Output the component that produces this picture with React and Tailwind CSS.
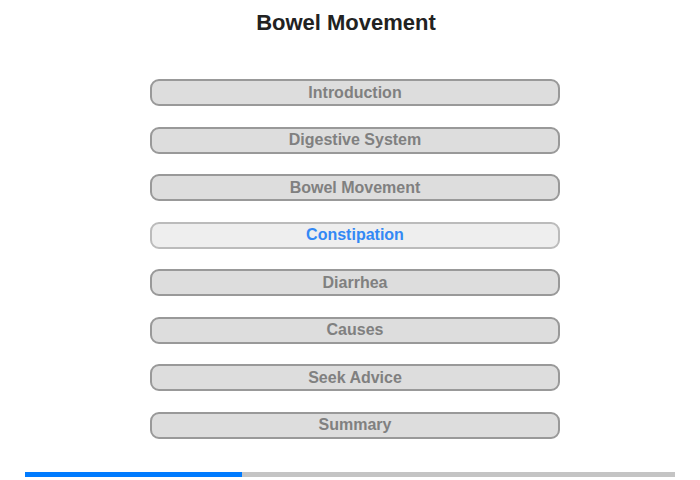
import React from 'react';

const sections = [
  'Introduction',
  'Digestive System',
  'Bowel Movement',
  'Constipation',
  'Diarrhea',
  'Causes',
  'Seek Advice',
  'Summary',
];

const App = () => {
  const active = 'Constipation';

  return (
    <div className="w-[700px] h-[480px] bg-white flex flex-col items-center font-['Liberation_Sans',Arial,sans-serif]">
      <h1 className="mt-[10px] mr-[8px] text-[22px] leading-[26px] font-bold text-[#222]">Bowel Movement</h1>

      <div className="mt-[43px] ml-[10px] flex flex-col gap-[20.5px] w-[410px]">
        {sections.map((s) =>
          s === active ? (
            <div
              key={s}
              className="h-[27px] rounded-[9px] border-2 border-[#bbbbbb] bg-[#eeeeee] flex items-center justify-center text-[16px] font-bold text-[#3388f5]"
            >
              {s}
            </div>
          ) : (
            <div
              key={s}
              className="h-[27px] rounded-[9px] border-2 border-[#999999] bg-[#dddddd] flex items-center justify-center text-[16px] font-bold text-[#808080]"
            >
              {s}
            </div>
          )
        )}
      </div>

      <div className="mt-auto mb-[3px] w-[650px] h-[5px] bg-[#c4c4c4] flex">
        <div className="w-[217px] h-full bg-[#007bff]"></div>
      </div>
    </div>
  );
};

export default App;
